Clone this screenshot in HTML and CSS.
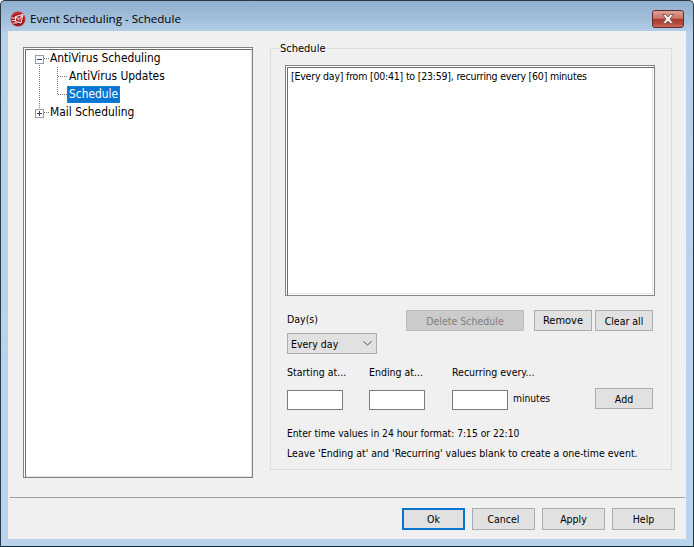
FILE: index.html
```html
<!DOCTYPE html>
<html lang="en">
<head>
<meta charset="utf-8">
<title>Event Scheduling - Schedule</title>
<link rel="stylesheet" href="styles.css">
</head>
<body>
<div class="window">
  <header class="titlebar">
    <svg class="app-icon" width="16" height="16" viewBox="0 0 16 16">
      <circle cx="8" cy="8" r="7.5" fill="#c22f33"/>
      <circle cx="8" cy="9" r="6" fill="#98181f"/>
      <path d="M1.500 7h4M2 9.500h4M3 12h4" stroke="#f7e4e1" stroke-width="1" fill="none"/>
      <path d="M5.500 5.500l7.500-2-2 8.500-5.500-1.500z" fill="#b5383a" stroke="#fbeeec" stroke-width="1"/>
      <path d="M5.500 5.500l3.500 3 4-5" fill="none" stroke="#fbeeec" stroke-width="1"/>
    </svg>
    <span class="title">Event Scheduling - Schedule</span>
    <button class="close" aria-label="Close">
      <svg width="16" height="10" viewBox="0 0 16 10">
        <path d="M2.500.500h3L8 3l2.500-2.500h3L10 5l3.500 4.500h-3L8 7 5.500 9.500h-3L6 5z" fill="#f4f1f0" stroke="#6f4a46" stroke-width=".8"/>
      </svg>
    </button>
  </header>
  <div class="client">
    <main class="content">
      <nav class="tree">
        <div class="node">
          <span class="expander"><svg width="9" height="9" viewBox="0 0 9 9"><rect x=".5" y=".5" width="8" height="8" fill="#fff" stroke="#8f9db0"/><path d="M2 4.500h5" stroke="#2b3f78"/></svg></span>
          <span class="dash"></span><span class="label">AntiVirus Scheduling</span>
        </div>
        <div class="branch">
          <div class="children">
            <div class="node child"><span class="dash"></span><span class="label">AntiVirus Updates</span></div>
            <div class="node child"><span class="dash"></span><span class="label selected">Schedule</span></div>
          </div>
        </div>
        <div class="node">
          <span class="expander"><svg width="9" height="9" viewBox="0 0 9 9"><rect x=".5" y=".5" width="8" height="8" fill="#fff" stroke="#8f9db0"/><path d="M2 4.500h5M4.500 2v5" stroke="#2b3f78"/></svg></span>
          <span class="dash"></span><span class="label">Mail Scheduling</span>
        </div>
      </nav>
      <section class="group">
        <span class="group-label">Schedule</span>
        <div class="listbox">
          <div class="list-item">[Every day] from [00:41] to [23:59], recurring every [60] minutes</div>
        </div>
        <div class="form">
          <div class="row-days">
            <div class="day-col">
              <span class="text day-label">Day(s)</span>
              <div class="select">
                <span>Every day</span>
                <svg width="9" height="5" viewBox="0 0 9 5"><path d="M.5.500l4 3.500 4-3.500" fill="none" stroke="#555"/></svg>
              </div>
            </div>
            <button class="btn disabled delete">Delete Schedule</button>
            <button class="btn remove">Remove</button>
            <button class="btn clear">Clear all</button>
          </div>
          <div class="row-times">
            <div class="field start"><span class="text">Starting at...</span><span class="input"></span></div>
            <div class="field end"><span class="text">Ending at...</span><span class="input"></span></div>
            <div class="field recur"><span class="text">Recurring every...</span><span class="input"></span></div>
            <span class="text minutes">minutes</span>
            <button class="btn add">Add</button>
          </div>
          <p class="text hint first">Enter time values in 24 hour format: 7:15 or 22:10</p>
          <p class="text hint">Leave 'Ending at' and 'Recurring' values blank to create a one-time event.</p>
        </div>
      </section>
    </main>
    <div class="separator"></div>
    <footer class="actions">
      <button class="btn action default">Ok</button>
      <button class="btn action">Cancel</button>
      <button class="btn action">Apply</button>
      <button class="btn action">Help</button>
    </footer>
  </div>
</div>
</body>
</html>
```
FILE: styles.css
```css
* { box-sizing: border-box; }
html, body { margin: 0; height: 100%; }
body {
  font-family: "DejaVu Sans Condensed", "DejaVu Sans", sans-serif;
  font-size: 10.5px;
  color: #000;
  background: #fff;
}
.window {
  width: 694px;
  height: 547px;
  display: flex;
  flex-direction: column;
  padding: 0 7px 7px;
  border: 1px solid #2b3a44;
  border-bottom-color: #0b2a33;
  border-radius: 5px 5px 0 0;
  background: linear-gradient(180deg, #8fafcd 0, #a5c1dc 20px, #b9d2ea 34px, #bad3ec 100%);
}
.titlebar {
  height: 30px;
  flex: none;
  display: flex;
  align-items: center;
  margin: 0 -1px;
  padding-top: 5px;
  position: relative;
}
.app-icon { margin: 0 4px 0 3px; flex: none; }
.title { font-family: "Open Sans", sans-serif; font-size: 11.6px; }
.close {
  position: absolute;
  right: 3px;
  top: 9px;
  width: 32px;
  height: 18px;
  padding: 0;
  border: 1px solid #5e2a2c;
  border-radius: 3px;
  background: linear-gradient(180deg, #dca196 0, #cb7668 45%, #a93a2e 52%, #b2483b 75%, #c96c5e 100%);
  display: flex;
  align-items: center;
  justify-content: center;
}
.client {
  flex: 1;
  display: flex;
  flex-direction: column;
  background: #f0f0f0;
}
.content {
  flex: none;
  height: 466px;
  display: flex;
  align-items: flex-start;
  padding: 16px 0 0 15px;
}
.tree {
  width: 230px;
  height: 431px;
  flex: none;
  background: #fff;
  border: 1px solid #82838a;
  box-shadow: inset 1px 1px 0 #fff, inset 2px 2px 0 #6d6d6d, inset -1px -1px 0 #e3e3e3;
  padding: 1px 0 0 11px;
  font-size: 11.9px;
}
.node { height: 18px; display: flex; align-items: center; white-space: nowrap; }
.expander { width: 9px; height: 9px; flex: none; display: block; line-height: 0; margin-top: 2px; }
.dash { width: 5px; height: 0; border-top: 1px dotted #777; flex: none; }
.label { padding: 0 2px 0 1px; height: 17px; line-height: 17px; }
.branch { height: 45px; margin: -4px 0 -5px 4px; padding-top: 4px; border-left: 1px dotted #777; }
.children { margin-left: 17px; height: 27px; border-left: 1px dotted #777; }
.child .dash { width: 9px; }
.child .label { padding-left: 2px; }
.selected {
  background: #0a75d2;
  color: #fff;
  outline: 1px dotted #a06a10;
  outline-offset: -1px;
}
.group {
  position: relative;
  width: 402px;
  height: 422px;
  margin: 1px 0 0 17px;
  flex: none;
  border: 1px solid #dcdcdc;
  padding: 16px 0 0 14px;
}
.group-label {
  position: absolute;
  left: 8px;
  top: -7px;
  padding: 0 1px;
  line-height: 14px;
  background: #f0f0f0;
  font-size: 11px;
}
.listbox {
  width: 370px;
  height: 231px;
  background: #fff;
  border: 1px solid #82838a;
  box-shadow: inset 1px 1px 0 #fff, inset 2px 2px 0 #6d6d6d, inset -1px -1px 0 #fff, inset -2px -2px 0 #e3e3e3;
  padding: 3px 5px;
}
.list-item { line-height: 14px; white-space: nowrap; letter-spacing: -.21px; }
.form { padding: 14px 0 0 2px; }
.text { white-space: nowrap; line-height: 14px; }
.row-days { display: flex; align-items: flex-start; }
.day-col { width: 119px; flex: none; display: flex; flex-direction: column; gap: 7px; padding-top: 2px; }
.day-label { display: block; }
.select {
  width: 90px;
  height: 21px;
  border: 1px solid #acacac;
  background: #e1e1e1;
  display: flex;
  align-items: center;
  justify-content: space-between;
  padding: 0 3px 0 3px;
}
.select svg { margin-right: 1px; }
.btn {
  height: 21px;
  padding: 0;
  font: inherit;
  color: #000;
  background: #e1e1e1;
  border: 1px solid #adadad;
  flex: none;
}
.delete { width: 118px; }
.disabled { background: #cbcbcb; color: #808080; border-color: #bcbcbc; }
.remove { width: 58px; margin-left: 10px; font-size: 11px; }
.clear { width: 58px; margin-left: 3px; }
.row-times { display: flex; align-items: flex-end; margin-top: 11px; }
.field { display: flex; flex-direction: column; gap: 11px; flex: none; }
.start { width: 82px; }
.end { width: 83px; }
.recur { width: 61px; }
.input { display: block; width: 56px; height: 20px; background: #fff; border: 1px solid #7a7a7a; }
.minutes { width: 82px; align-self: flex-end; padding-bottom: 4px; font-size: 10.2px; }
.add { width: 58px; margin-bottom: 1px; }
.hint { margin: 0; }
.first { margin-top: 17px; font-size: 10.2px; }
.hint + .hint { margin-top: 5px; }
.separator { height: 1px; margin: 0 1px 0 2px; background: #a0a0a0; box-shadow: 0 1px 0 #f0f0f0; flex: none; }
.actions { display: flex; justify-content: flex-end; gap: 7px; padding: 10px 11px 0 0; }
.action { width: 63px; height: 22px; }
.default { border: 2px solid #0a74d0; }
```
